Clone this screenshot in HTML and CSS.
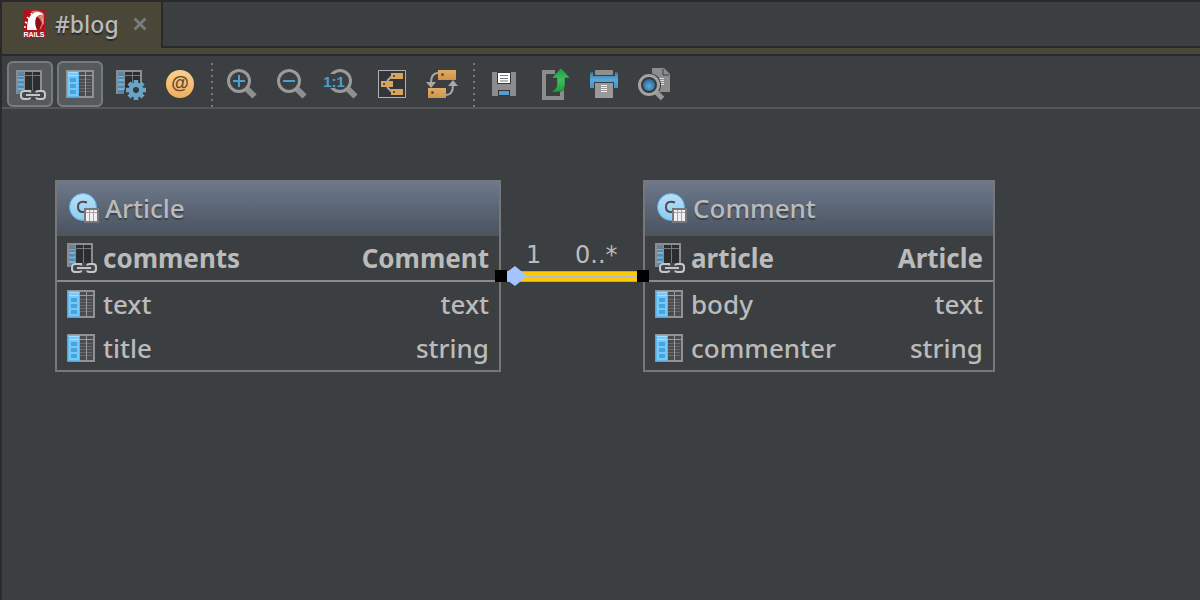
FILE: index.html
```html
<!DOCTYPE html>
<html lang="en">
<head>
<meta charset="utf-8">
<title>#blog</title>
<link rel="stylesheet" href="styles.css">
</head>
<body>
<svg class="defs" aria-hidden="true">
  <defs>
    <linearGradient id="g-node" x1="0" y1="0" x2="0" y2="1"><stop offset="0" stop-color="#e0ac66"/><stop offset="1" stop-color="#cc9549"/></linearGradient>
    <linearGradient id="g-class" x1="0" y1="0" x2="0" y2="1"><stop offset="0" stop-color="#b8e0f7"/><stop offset="1" stop-color="#8ccbf0"/></linearGradient>
    <linearGradient id="g-at" x1="0" y1="0" x2="0" y2="1"><stop offset="0" stop-color="#fbd08e"/><stop offset="1" stop-color="#efae5c"/></linearGradient>
    <linearGradient id="g-blue" x1="0" y1="0" x2="0" y2="1"><stop offset="0" stop-color="#3a7ca8"/><stop offset=".5" stop-color="#57a8da"/><stop offset="1" stop-color="#4793c4"/></linearGradient>
    <linearGradient id="g-green" x1="0" y1="0" x2="0" y2="1"><stop offset="0" stop-color="#1f9a3c"/><stop offset=".5" stop-color="#3cc060"/><stop offset="1" stop-color="#1f9a3c"/></linearGradient>
    <radialGradient id="g-lens" cx=".5" cy=".6" r=".55"><stop offset="0" stop-color="#5aa9da"/><stop offset="1" stop-color="#2f6d99"/></radialGradient>
    <symbol id="i-grid" viewBox="0 0 30 30">
      <path d="M0 0H26V20H8V24H0Z" fill="#8c8d8e"/>
      <path d="M2 2H8V24H2Z" fill="#5f87a3"/>
      <path d="M2 6H8M2 10H8M2 14.500H8M2 19H8" stroke="#6ab4e2" stroke-width="2"/>
      <path d="M9 2H24V20H9Z" fill="#2c2d2e"/>
      <path d="M2 5.500H24M16.500 2V20" stroke="#76787a"/>
    </symbol>
    <symbol id="i-link" viewBox="0 0 30 30">
      <use href="#i-grid" width="30" height="30"/>
      <rect x="4" y="20" width="26" height="10" rx="4" fill="#44484a"/>
      <path d="M14 21.500V21H8Q5 21 5 24V26Q5 29 8 29H12Q14 29 14.500 27.500M14.500 22.500L14 21M20 22.500Q20.500 21 22.500 21H26Q29 21 29 24V26Q29 29 26 29H22.500Q20.500 29 20 27.500" fill="none" stroke="#c4c6c8" stroke-width="2"/>
      <path d="M10 25H24" stroke="#c4c6c8" stroke-width="2"/>
    </symbol>
    <symbol id="i-column" viewBox="0 0 30 30">
      <path d="M0 0H28V28H0Z" fill="#929292"/>
      <path d="M13 2H26V26H13Z" fill="#4b4c4d"/>
      <path d="M13 9.500H25M13 12.500H25M13 15.500H25M13 18.500H25M13 21.500H25" stroke="#6a6b6c"/>
      <path d="M13 5.500H26M19.500 2V26" stroke="#9b9b9b"/>
      <path d="M1.500 1.500H12.500V26.500H1.500Z" fill="#75c8f8" stroke="#5cb8ef"/>
      <path d="M2 2.500H12M2 5.500H12" stroke="#a4dcfb"/>
      <path d="M4 8H10V12H4ZM4 14H10V18H4ZM4 20H10V24H4Z" fill="#46a3dd"/>
    </symbol>
    <symbol id="i-class" viewBox="0 0 30 30">
      <circle cx="14" cy="14" r="13.500" fill="url(#g-class)" stroke="#5bb2e6"/>
      <path d="M18 9.500Q16 8.800 14 8.800Q9 8.800 9 14Q9 19 14 19H16" fill="none" stroke="#4d4d4d" stroke-width="2"/>
      <path d="M15 15H30V30H15Z" fill="#77787a"/>
      <path d="M17 17H28V28H17Z" fill="#f0f0f2"/>
      <path d="M17 19.500H28M20.500 17V28M24.500 17V28" stroke="#a4a5a9"/>
    </symbol>
    <symbol id="i-lens" viewBox="0 0 46 46">
      <path d="M28 28L35.500 35.500" stroke="#8f8f8f" stroke-width="6"/>
      <circle cx="20" cy="20" r="10.500" fill="none" stroke="#9a9a9a" stroke-width="3"/>
    </symbol>
  </defs>
</svg>

<header class="tabs">
  <div class="tab">
    <svg class="rails" viewBox="0 0 22 28" aria-hidden="true">
      <path d="M0 0H22V28H0Z" fill="#b3121d"/>
      <path d="M8 1Q17 -1 21 4V15L16 9Z" fill="#cf7a62"/>
      <path d="M13 7Q19 7 18 19H14Q11 13 13 7Z" fill="#8e0d16"/>
      <path d="M4 20Q4 3 14 2Q19 2 20 5Q15 4 13 8Q11 13 14 20Z" fill="#fff"/>
      <path d="M17 6Q21 9 19 15L17 19" fill="none" stroke="#e3a58f"/>
      <path d="M1 17H3M2 12L4 13M4 7L6 9M8 3L9 5" stroke="#fff" stroke-width="1.500"/>
      <text class="rails-text" x="11" y="27" text-anchor="middle">RAILS</text>
    </svg>
    <span class="tab-name">#blog</span>
    <button class="close" aria-label="Close tab"><svg viewBox="0 0 14 14"><path d="M1.500 1.500L12.500 12.500M12.500 1.500L1.500 12.500" stroke="#777a7c" stroke-width="3"/></svg></button>
  </div>
  <div class="tab-rest"></div>
</header>

<div class="toolbar" role="toolbar" aria-label="Diagram">
  <button class="tool on" aria-pressed="true" aria-label="Associations"><svg viewBox="0 0 46 46"><use href="#i-link" x="9" y="9" width="30" height="30"/></svg></button>
  <button class="tool on" aria-pressed="true" aria-label="Columns"><svg viewBox="0 0 46 46"><use href="#i-column" x="9" y="9" width="30" height="30"/></svg></button>
  <button class="tool" aria-label="Column settings"><svg viewBox="0 0 46 46">
    <use href="#i-grid" x="9" y="9" width="30" height="30"/>
    <g stroke="#68a4c8" stroke-width="4.500"><path d="M29 19V39M19 29H39M22 22L36 36M36 22L22 36"/></g>
    <circle cx="29" cy="29" r="7.500" fill="#68a4c8"/><circle cx="29" cy="29" r="3" fill="#35383a"/></svg></button>
  <button class="tool" aria-label="Annotations"><svg viewBox="0 0 46 46"><circle cx="23" cy="23" r="14" fill="url(#g-at)"/><text class="at" x="23" y="28" text-anchor="middle">@</text></svg></button>
  <span class="sep"></span>
  <button class="tool" aria-label="Zoom in"><svg viewBox="0 0 46 46"><use href="#i-lens" width="46" height="46"/><path d="M14 20H26M20 14V26" stroke="#4d9fd0" stroke-width="2"/></svg></button>
  <button class="tool" aria-label="Zoom out"><svg viewBox="0 0 46 46"><use href="#i-lens" width="46" height="46"/><path d="M14 20H26" stroke="#4d9fd0" stroke-width="2"/></svg></button>
  <button class="tool" aria-label="Actual size"><svg viewBox="0 0 46 46"><use href="#i-lens" x="1" width="46" height="46"/><path d="M6 13H15V27H6Z" fill="#3c3f41"/><text class="one" x="15" y="26" text-anchor="middle">1:1</text></svg></button>
  <button class="tool" aria-label="Apply layout"><svg viewBox="0 0 46 46">
    <path d="M9.500 9.500H36.500V36.500H9.500Z" fill="#333638" stroke="#b0b0b0"/>
    <path d="M18 20L23 15M18 26L23 31" stroke="#a8a8a8" stroke-width="2"/>
    <path d="M22 12H34V18H22ZM12 20H24V26H12ZM22 28H34V34H22Z" fill="#d9a55c"/>
    <path d="M24 14H26V16H24ZM14 22H16V24H14ZM24 30H26V32H24Z" fill="#58534c"/></svg></button>
  <button class="tool" aria-label="Route edges"><svg viewBox="0 0 46 46">
    <path d="M19 12Q12 12 12 22M27 34Q34 34 34 24" fill="none" stroke="#a8a8a8" stroke-width="2"/>
    <path d="M7 21H17L12 27ZM29 25H39L34 19Z" fill="#a8a8a8"/>
    <path d="M19 9H37V19H19Z" fill="url(#g-node)"/><path d="M9 27H27V37H9Z" fill="url(#g-node)"/>
    <circle cx="23.500" cy="13.500" r="1.500" fill="#58534c"/><circle cx="13.500" cy="31.500" r="1.500" fill="#58534c"/></svg></button>
  <span class="sep"></span>
  <button class="tool" aria-label="Save diagram"><svg viewBox="0 0 46 46">
    <path d="M11 11H35V35H11Z" fill="#8c8c8c"/><path d="M16 11H30V23H16ZM17 29H29V35H17Z" fill="#35383a"/>
    <path d="M17 12H29V22H17Z" fill="#fff"/><path d="M19 14.500H27M19 17.500H27M19 20H27" stroke="#777"/>
    <path d="M18 30H28V34H18Z" fill="#559fce"/></svg></button>
  <button class="tool" aria-label="Export to image"><svg viewBox="0 0 46 46">
    <path d="M24 11H13V37H31V25" fill="none" stroke="#8c8c8c" stroke-width="4"/>
    <path d="M30 7L39 17H34V24Q34 31 26 31H19Q26 29 26 23V17H21Z" fill="url(#g-green)" stroke="#33443a" stroke-width=".5"/></svg></button>
  <button class="tool" aria-label="Print"><svg viewBox="0 0 46 46">
    <path d="M9 13Q9 11 12 11V15H34V11Q37 11 37 13V27H9Z" fill="url(#g-blue)"/>
    <path d="M14 9H32V14H14Z" fill="#8f8f8f"/><path d="M13 21H33V28H13Z" fill="#3c3f41"/>
    <path d="M14 22H32V37H14Z" fill="#999"/><path d="M20 24.500H26M20 26.500H26M20 28.500H26M20 30.500H26" stroke="#f4f4f4"/></svg></button>
  <button class="tool" aria-label="Print preview"><svg viewBox="0 0 46 46">
    <path d="M21 7H33L39 13V31H21Z" fill="#8c8c8c"/><path d="M32 8V14H38" fill="none" stroke="#3c3f41"/>
    <path d="M26 17.500H33M28 19.500H33M28 21.500H33M28 23.500H33" stroke="#ddd"/>
    <circle cx="18" cy="24" r="12" fill="#3c3f41"/><path d="M25 31L31.500 37.500" stroke="#999" stroke-width="5"/>
    <circle cx="18" cy="24" r="9.500" fill="#35383a" stroke="#a3a3a3" stroke-width="3"/><circle cx="18" cy="24" r="6" fill="url(#g-lens)"/></svg></button>
</div>

<main class="canvas">
  <section class="entity article">
    <h2 class="title"><svg class="icon"><use href="#i-class"/></svg>Article</h2>
    <div class="row key"><svg class="icon"><use href="#i-link"/></svg><span>comments</span><span class="type">Comment</span></div>
    <div class="row"><svg class="icon" viewBox="0 -1 30 30"><use href="#i-column" width="30" height="30"/></svg><span>text</span><span class="type">text</span></div>
    <div class="row"><svg class="icon" viewBox="0 -1 30 30"><use href="#i-column" width="30" height="30"/></svg><span>title</span><span class="type">string</span></div>
  </section>
  <section class="entity comment">
    <h2 class="title"><svg class="icon"><use href="#i-class"/></svg>Comment</h2>
    <div class="row key"><svg class="icon"><use href="#i-link"/></svg><span>article</span><span class="type">Article</span></div>
    <div class="row"><svg class="icon" viewBox="0 -1 30 30"><use href="#i-column" width="30" height="30"/></svg><span>body</span><span class="type">text</span></div>
    <div class="row"><svg class="icon" viewBox="0 -1 30 30"><use href="#i-column" width="30" height="30"/></svg><span>commenter</span><span class="type">string</span></div>
  </section>
  <span class="mult from">1</span>
  <span class="mult to">0..*</span>
  <svg class="edge" viewBox="0 0 154 20" aria-hidden="true">
    <path d="M12 5H142V16H12Z" fill="#d9a90a"/>
    <path d="M12 6H142V15H12Z" fill="#ffc800"/>
    <path d="M12 10H142V12H12Z" fill="#a9bfe0"/>
    <path d="M12 6L20 0L32 10L20 20L12 14Z" fill="#a3c4ff"/>
    <path d="M0 4H12V16H0ZM142 4H154V16H142Z" fill="#000"/>
  </svg>
</main>
</body>
</html>
```

FILE: styles.css
```css
* { box-sizing: border-box; }

body {
  margin: 0;
  min-height: 100vh;
  display: flex;
  flex-direction: column;
  border-left: 2px solid #2a2a2a;
  background: #3c3f41;
  color: #bbb;
  font-family: "Noto Sans", "Open Sans", sans-serif;
  font-size: 26px;
  font-weight: 500;
}

button {
  padding: 0;
  border: 0;
  background: none;
}

svg { display: block; }

.defs {
  position: absolute;
  width: 0;
  height: 0;
}

.tabs {
  display: flex;
  height: 56px;
  border-top: 2px solid #2a2a2a;
  border-bottom: 2px solid #2a2a2a;
  background: #4a4638;
}

.tab {
  display: flex;
  align-items: center;
  padding: 0 14px 8px 21px;
}

.rails {
  width: 22px;
  height: 28px;
  margin-right: 10px;
}

.rails-text {
  fill: #fff;
  font: bold 7px "Liberation Sans", sans-serif;
}

.tab-name {
  font-size: 23px;
  line-height: 32px;
  text-shadow: 0 2px 1px #2a2a2a;
}

.close {
  width: 14px;
  height: 14px;
  margin-left: 14px;
}

.tab-rest {
  flex: 1;
  height: 46px;
  border-left: 2px solid #2a2a2a;
  border-bottom: 2px solid #2a2a2a;
  background: #3c3f41;
}

.toolbar {
  display: flex;
  gap: 4px;
  padding: 5px 5px 0;
  border-bottom: 2px solid #555;
}

.tool {
  width: 46px;
  height: 46px;
  border-radius: 6px;
}

.on {
  background: #555a5c;
  box-shadow: inset 0 0 0 2px #777b7e;
}

.at {
  fill: #5e4a33;
  font: 600 18px "Liberation Sans", sans-serif;
}

.one {
  fill: #4d9fd0;
  font: bold 15px "Liberation Sans", sans-serif;
}

.sep {
  width: 8px;
  background: linear-gradient(#77797b 2px, transparent 2px) 4px 2px / 2px 6px repeat-y;
}

.canvas {
  position: relative;
  flex: 1;
}

.entity {
  position: absolute;
  top: 71px;
  border: 2px solid #777;
}

.article {
  left: 53px;
  width: 446px;
}

.comment {
  left: 641px;
  width: 352px;
}

.title {
  display: flex;
  align-items: center;
  gap: 6px;
  height: 54px;
  margin: 0;
  padding: 0 12px;
  border-bottom: 2px solid #555;
  background: linear-gradient(#6c788b, #4b5460);
  font-size: 26px;
  font-weight: 500;
  text-shadow: 0 2px 1px #3c434c;
}

.icon {
  flex: none;
  width: 30px;
  height: 30px;
}

.row {
  display: flex;
  align-items: center;
  gap: 6px;
  height: 44px;
  padding: 0 10px;
}

.key {
  height: 46px;
  border-bottom: 2px solid #8a8a8a;
  font-weight: 700;
}

.type { margin-left: auto; }

.mult {
  position: absolute;
  top: 130px;
  font: 24px/32px "DejaVu Sans", sans-serif;
}

.from { left: 524px; }

.to { left: 573px; }

.edge {
  position: absolute;
  top: 157px;
  left: 493px;
  width: 154px;
  height: 20px;
}
```
